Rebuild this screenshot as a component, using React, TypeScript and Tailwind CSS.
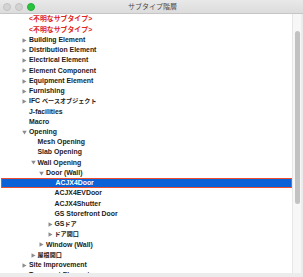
import React from "react";

type Row = {
  label: React.ReactNode;
  level: number;
  arrow?: "right" | "down";
  unknown?: boolean;
  selected?: boolean;
};

// Japanese runs in the tree come out a little smaller than the latin text
const jp = (s: string) => <span className="text-[6.1px]">{s}</span>;

const rows: Row[] = [
  { label: "<不明なサブタイプ>", level: 0, unknown: true },
  { label: "<不明なサブタイプ>", level: 0, unknown: true },
  { label: "Building Element", level: 0, arrow: "right" },
  { label: "Distribution Element", level: 0, arrow: "right" },
  { label: "Electrical Element", level: 0, arrow: "right" },
  { label: "Element Component", level: 0, arrow: "right" },
  { label: "Equipment Element", level: 0, arrow: "right" },
  { label: "Furnishing", level: 0, arrow: "right" },
  { label: <>IFC {jp("ベースオブジェクト")}</>, level: 0, arrow: "right" },
  { label: "J-facilities", level: 0 },
  { label: "Macro", level: 0 },
  { label: "Opening", level: 0, arrow: "down" },
  { label: "Mesh Opening", level: 1 },
  { label: "Slab Opening", level: 1 },
  { label: "Wall Opening", level: 1, arrow: "down" },
  { label: "Door (Wall)", level: 2, arrow: "down" },
  { label: "ACJX4Door", level: 3, selected: true },
  { label: "ACJX4EVDoor", level: 3 },
  { label: "ACJX4Shutter", level: 3 },
  { label: "GS Storefront Door", level: 3 },
  { label: <>GS{jp("ドア")}</>, level: 3, arrow: "right" },
  { label: jp("ドア開口"), level: 3, arrow: "right" },
  { label: "Window (Wall)", level: 2, arrow: "right" },
  { label: jp("屋根開口"), level: 1, arrow: "right" },
  { label: "Site Improvement", level: 0, arrow: "right" },
  { label: "Transport Element", level: 0, arrow: "right" },
];

const indent = ["pl-[22px]", "pl-[30.5px]", "pl-[39px]", "pl-[47.5px]"];

function Arrow({ dir }: { dir?: "right" | "down" }) {
  if (!dir) return <span className="w-[7px] shrink-0" />;
  return (
    <span className="w-[7px] shrink-0 flex items-center">
      <svg width="5" height="5" viewBox="0 0 5 5">
        {dir === "right" ? (
          <polygon points="0.5,0.2 4.5,2.5 0.5,4.8" fill="#8c8c8c" />
        ) : (
          <polygon points="0.2,0.8 4.8,0.8 2.5,4.6" fill="#8c8c8c" />
        )}
      </svg>
    </span>
  );
}

export default function App() {
  return (
    <div
      className="w-[303px] h-[277px] flex flex-col overflow-hidden bg-[#ececec]"
      style={{ fontFamily: '"Liberation Sans", "Noto Sans CJK JP", sans-serif' }}
    >
      <div className="h-[14px] shrink-0 relative flex items-center justify-center bg-gradient-to-b from-[#e9e9e9] to-[#dcdcdc] border-b border-[#c6c6c6]">
        <div className="absolute left-[3px] top-[2.5px] flex gap-[4px]">
          <span className="w-[8px] h-[8px] rounded-full bg-[#d3d3d3] border border-[#c2c2c2]" />
          <span className="w-[8px] h-[8px] rounded-full bg-[#d3d3d3] border border-[#c2c2c2]" />
          <span className="w-[8px] h-[8px] rounded-full bg-[#2ac33f] border border-[#22ad35]" />
        </div>
        <span className="text-[7px] leading-none text-[#4a4a4a] ml-[2px]">サブタイプ階層</span>
      </div>

      <div className="flex flex-1 min-h-0 mb-[4px] mr-[2px]">
        <div className="w-[292px] bg-white overflow-hidden pt-[0.5px]">
          {rows.map((row, i) => (
            <div
              key={i}
              className={
                "h-[10.24px] flex items-center text-[6.9px] font-bold whitespace-nowrap " +
                indent[row.level] +
                (row.selected
                  ? " ml-[1px] bg-[#0a62d6] border border-[#ee4a2c] text-white"
                  : row.unknown
                  ? " text-[#e0261c]"
                  : " text-[#1c1c1c]")
              }
            >
              <Arrow dir={row.arrow} />
              <span className={row.selected ? "-ml-[1px]" : ""}>{row.label}</span>
            </div>
          ))}
        </div>
        <div className="w-[9px] bg-[#f7f7f7] border-l border-[#e6e6e6] pt-[17px] flex justify-center">
          <div className="w-[5px] h-[173px] rounded-full bg-[#c2c2c2]" />
        </div>
      </div>
    </div>
  );
}
